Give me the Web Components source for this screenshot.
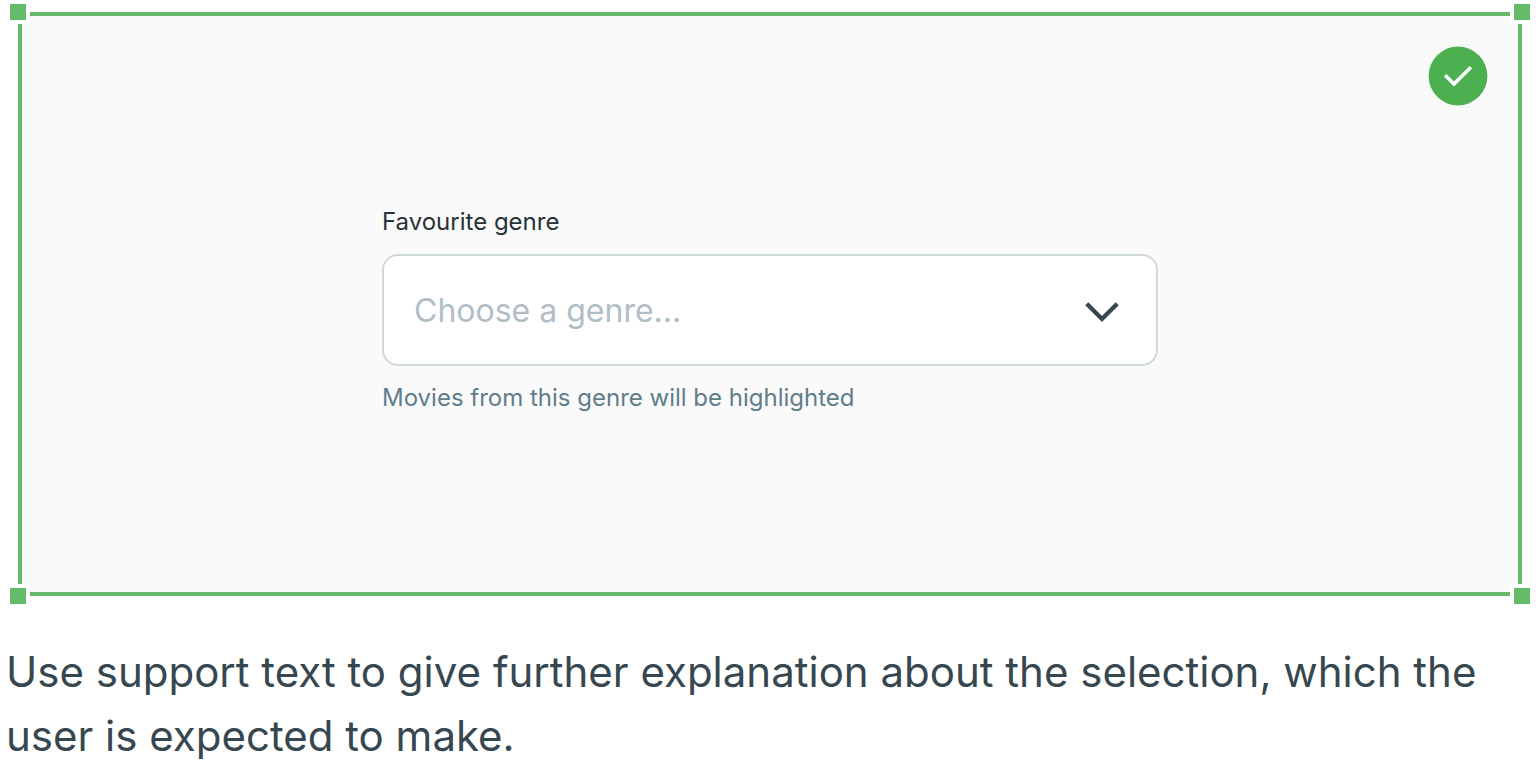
<!DOCTYPE html>
<html lang="en">
<head>
<meta charset="utf-8">
<title>Select: support text</title>
<style>
body { margin: 0; background: #fff; color: #37474f; font-family: Inter, "Noto Sans", sans-serif; }
</style>
</head>
<body>
<guide-example>
  <example-frame>
    <status-badge slot="badge"></status-badge>
    <select-field label="Favourite genre" placeholder="Choose a genre..." support="Movies from this genre will be highlighted"></select-field>
  </example-frame>
  <guide-caption slot="caption">Use support text to give further explanation about the selection, which the user is expected to make.</guide-caption>
</guide-example>
<script>
class BaseElement extends HTMLElement {
  constructor() {
    super();
    this.attachShadow({ mode: "open" }).innerHTML = this.constructor.markup;
  }
}

class GuideExample extends BaseElement {
  static markup = `
    <style>
      :host { display: block; }
      figure { margin: 0; padding-top: 12px; display: flex; flex-direction: column; gap: 44px; }
      figcaption { padding: 0 6px; }
    </style>
    <figure><slot></slot><figcaption><slot name="caption"></slot></figcaption></figure>`;
}

class ExampleFrame extends BaseElement {
  static markup = `
    <style>
      :host { display: block; position: relative; margin: 0 18px; }
      .area {
        box-sizing: border-box; min-height: 584px; padding: 12px 24px 0;
        display: grid; align-items: center; justify-items: center;
        border: 4px solid #66bb6a; background: #fafafa;
      }
      .handle {
        position: absolute; box-sizing: border-box; width: 24px; height: 24px;
        border: 4px solid #fff; background: #66bb6a;
      }
      .top { top: -12px; }
      .bottom { bottom: -12px; }
      .left { left: -12px; }
      .right { right: -12px; }
      .badge { position: absolute; top: 34px; right: 34px; }
    </style>
    <div class="area"><slot></slot></div>
    <div class="badge"><slot name="badge"></slot></div>
    <span class="handle top left"></span>
    <span class="handle top right"></span>
    <span class="handle bottom left"></span>
    <span class="handle bottom right"></span>`;
}

class StatusBadge extends BaseElement {
  static markup = `
    <style>
      :host { display: block; }
      svg { display: block; width: 60px; height: 60px; }
    </style>
    <svg viewBox="0 0 60 60" role="img" aria-label="Recommended">
      <circle cx="30" cy="30" r="29.4" fill="#4caf50"/>
      <path d="M17.2 29.2 26 38 42.8 21.2" fill="none" stroke="#fff" stroke-width="3.6"/>
    </svg>`;
}

class SelectField extends BaseElement {
  static markup = `
    <style>
      :host { display: block; width: 100%; max-width: 776px; }
      .field { display: flex; flex-direction: column; gap: 16px; }
      label, p { margin: 0; font-size: 24px; line-height: 32px; }
      label { color: #263238; }
      p { color: #607d8b; }
      .control { display: grid; align-items: center; }
      select, svg { grid-area: 1 / 1; }
      select {
        appearance: none; box-sizing: border-box; width: 100%; height: 112px; margin: 0; padding: 0 96px 0 30px;
        border: 2px solid #cfd8dc; border-radius: 16px; background: #fff;
        color: #263238; font: inherit; font-size: 32px;
      }
      select:invalid { color: #b0bec5; }
      option { color: #263238; }
      svg { justify-self: end; width: 48px; height: 48px; margin-right: 32px; pointer-events: none; }
    </style>
    <div class="field">
      <label for="control"></label>
      <div class="control">
        <select id="control" required aria-describedby="support"><option value="" disabled selected hidden></option></select>
        <svg viewBox="0 0 48 48" aria-hidden="true"><path d="M8.8 17.8 24 33 39.2 17.8" fill="none" stroke="#37474f" stroke-width="4.4"/></svg>
      </div>
      <p id="support"></p>
    </div>`;
  connectedCallback() {
    const root = this.shadowRoot;
    root.querySelector("label").textContent = this.getAttribute("label");
    root.querySelector("option").textContent = this.getAttribute("placeholder");
    root.querySelector("p").textContent = this.getAttribute("support");
  }
}

class GuideCaption extends BaseElement {
  static markup = `
    <style>
      :host { display: block; font-size: 42px; line-height: 64px; }
    </style>
    <slot></slot>`;
}

customElements.define("guide-example", GuideExample);
customElements.define("example-frame", ExampleFrame);
customElements.define("status-badge", StatusBadge);
customElements.define("select-field", SelectField);
customElements.define("guide-caption", GuideCaption);
</script>
</body>
</html>
